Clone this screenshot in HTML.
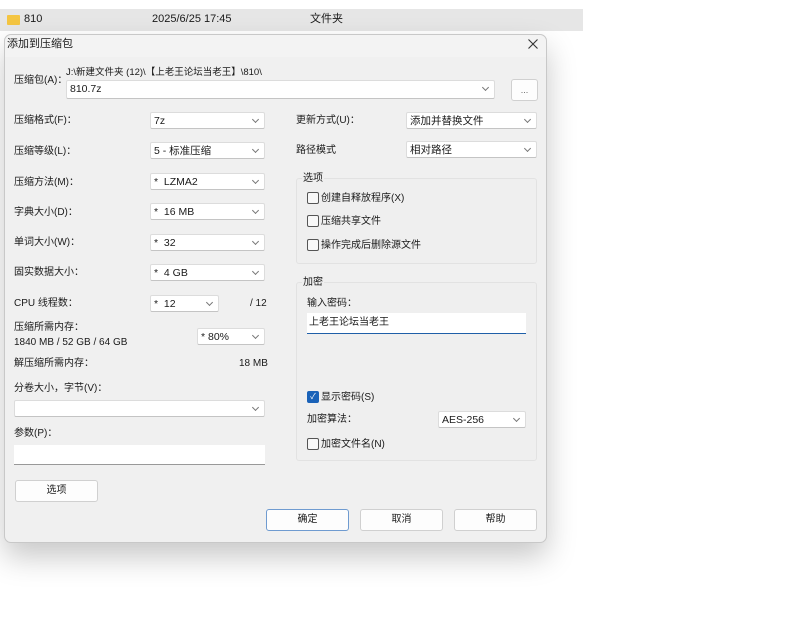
<!DOCTYPE html>
<html><head><meta charset="utf-8"><style>
*{box-sizing:border-box;margin:0;padding:0}
body{width:800px;height:635px;background:#fff;position:relative;overflow:hidden;font-family:"Liberation Sans","Noto Sans CJK SC",sans-serif;font-size:10px;line-height:13.5px;color:#1a1a1a}
.a{position:absolute;white-space:nowrap}
.bar{left:0;top:9px;width:583px;height:22px;background:#e6e6e6}
.dlg{left:4px;top:34px;width:543px;height:509px;background:#f0f0f0;border:1px solid #c8c8c8;border-radius:7px;box-shadow:0 14px 30px rgba(0,0,0,.22)}
.cb{background:#fff;border:1px solid #dcdcdc;border-bottom-color:#c4c4c4;border-radius:2px;height:17px;padding:2px 0 0 3px;font-size:10.5px;line-height:12px}
.cb::after{content:"";position:absolute;right:6px;top:4px;width:4px;height:4px;border-right:1px solid #777;border-bottom:1px solid #777;transform:rotate(45deg)}
.grp{border:1px solid #e2e2e2;background:#efefef;border-radius:3px}
.chk{width:12px;height:12px;border:1px solid #555;border-radius:2px;background:#f8f8f8}
.btn{background:#fdfdfd;border:1px solid #d0d0d0;border-radius:3px;height:22px;text-align:center;line-height:20px;font-size:10px}
</style></head><body>
<div class="a bar"></div>
<div class="a" style="left:7px;top:15px;width:13px;height:10px;background:#f4c542;border-radius:1px"></div>
<div class="a" style="left:24px;top:13px;font-size:11px;line-height:13px">810</div>
<div class="a" style="left:152px;top:13px;font-size:11px;line-height:13px">2025/6/25 17:45</div>
<div class="a" style="left:310px;top:13px;font-size:11px;line-height:13px">文件夹</div>
<div class="a dlg"></div>
<div class="a" style="left:5px;top:35px;width:541px;height:22px;background:#f3f3f3;border-radius:7px 7px 0 0"></div>
<div class="a" style="left:7px;top:38px;font-size:11px;line-height:13px">添加到压缩包</div>
<svg class="a" style="left:528px;top:39px" width="10" height="10" viewBox="0 0 10 10"><path d="M0.5 0.5L9.5 9.5M9.5 0.5L0.5 9.5" stroke="#333" stroke-width="1.1"/></svg>

<div class="a" style="left:14px;top:74px">压缩包(A)：</div>
<div class="a" style="left:66px;top:67px;font-size:9.5px;line-height:12px">J:\新建文件夹 (12)\【上老王论坛当老王】\810\</div>
<div class="a cb" style="left:66px;top:80px;width:429px;height:19px">810.7z</div>
<div class="a btn" style="left:511px;top:79px;width:27px;height:22px;font-size:9px;color:#666">...</div>

<div class="a" style="left:14px;top:114px">压缩格式(F)：</div>
<div class="a" style="left:14px;top:145px">压缩等级(L)：</div>
<div class="a" style="left:14px;top:176px">压缩方法(M)：</div>
<div class="a" style="left:14px;top:206px">字典大小(D)：</div>
<div class="a" style="left:14px;top:236px">单词大小(W)：</div>
<div class="a" style="left:14px;top:266px">固实数据大小：</div>
<div class="a" style="left:14px;top:297px">CPU 线程数：</div>
<div class="a" style="left:14px;top:321px">压缩所需内存：</div>
<div class="a" style="left:14px;top:336px">1840 MB / 52 GB / 64 GB</div>
<div class="a" style="left:14px;top:357px">解压缩所需内存：</div>
<div class="a" style="left:239px;top:357px">18 MB</div>
<div class="a" style="left:250px;top:297px">/ 12</div>

<div class="a cb" style="left:150px;top:112px;width:115px">7z</div>
<div class="a cb" style="left:150px;top:142px;width:115px">5 - 标准压缩</div>
<div class="a cb" style="left:150px;top:173px;width:115px">*&nbsp; LZMA2</div>
<div class="a cb" style="left:150px;top:203px;width:115px">*&nbsp; 16 MB</div>
<div class="a cb" style="left:150px;top:234px;width:115px">*&nbsp; 32</div>
<div class="a cb" style="left:150px;top:264px;width:115px">*&nbsp; 4 GB</div>
<div class="a cb" style="left:150px;top:295px;width:69px">*&nbsp; 12</div>
<div class="a cb" style="left:197px;top:328px;width:68px">* 80%</div>

<div class="a" style="left:14px;top:382px">分卷大小，字节(V)：</div>
<div class="a cb" style="left:14px;top:400px;width:251px"></div>
<div class="a" style="left:14px;top:427px">参数(P)：</div>
<div class="a" style="left:14px;top:445px;width:251px;height:20px;background:#fff;border-bottom:1px solid #999"></div>
<div class="a btn" style="left:15px;top:480px;width:83px">选项</div>

<div class="a" style="left:296px;top:114px">更新方式(U)：</div>
<div class="a cb" style="left:406px;top:112px;width:131px">添加并替换文件</div>
<div class="a" style="left:296px;top:144px">路径模式</div>
<div class="a cb" style="left:406px;top:141px;width:131px">相对路径</div>

<div class="a grp" style="left:296px;top:178px;width:241px;height:86px"></div>
<div class="a" style="left:302px;top:172px;background:#efefef;padding:0 1px">选项</div>
<div class="a chk" style="left:307px;top:192px"></div><div class="a" style="left:321px;top:192px">创建自释放程序(X)</div>
<div class="a chk" style="left:307px;top:215px"></div><div class="a" style="left:321px;top:215px">压缩共享文件</div>
<div class="a chk" style="left:307px;top:239px"></div><div class="a" style="left:321px;top:239px">操作完成后删除源文件</div>

<div class="a grp" style="left:296px;top:282px;width:241px;height:179px"></div>
<div class="a" style="left:302px;top:276px;background:#efefef;padding:0 1px">加密</div>
<div class="a" style="left:307px;top:297px">输入密码：</div>
<div class="a" style="left:307px;top:313px;width:219px;height:21px;background:#fff;border-bottom:1px solid #1f5fa8;padding:4px 0 0 2px;line-height:12px">上老王论坛当老王</div>
<div class="a chk" style="left:307px;top:391px;background:#1a62b8;border-color:#1a62b8;color:#fff;font-size:8px;line-height:10px;text-align:center">✓</div>
<div class="a" style="left:321px;top:391px">显示密码(S)</div>
<div class="a" style="left:307px;top:413px">加密算法：</div>
<div class="a cb" style="left:438px;top:411px;width:88px">AES-256</div>
<div class="a chk" style="left:307px;top:438px"></div><div class="a" style="left:321px;top:438px">加密文件名(N)</div>

<div class="a btn" style="left:266px;top:509px;width:83px;border-color:#6f9bd0">确定</div>
<div class="a btn" style="left:360px;top:509px;width:83px">取消</div>
<div class="a btn" style="left:454px;top:509px;width:83px">帮助</div>
</body></html>
